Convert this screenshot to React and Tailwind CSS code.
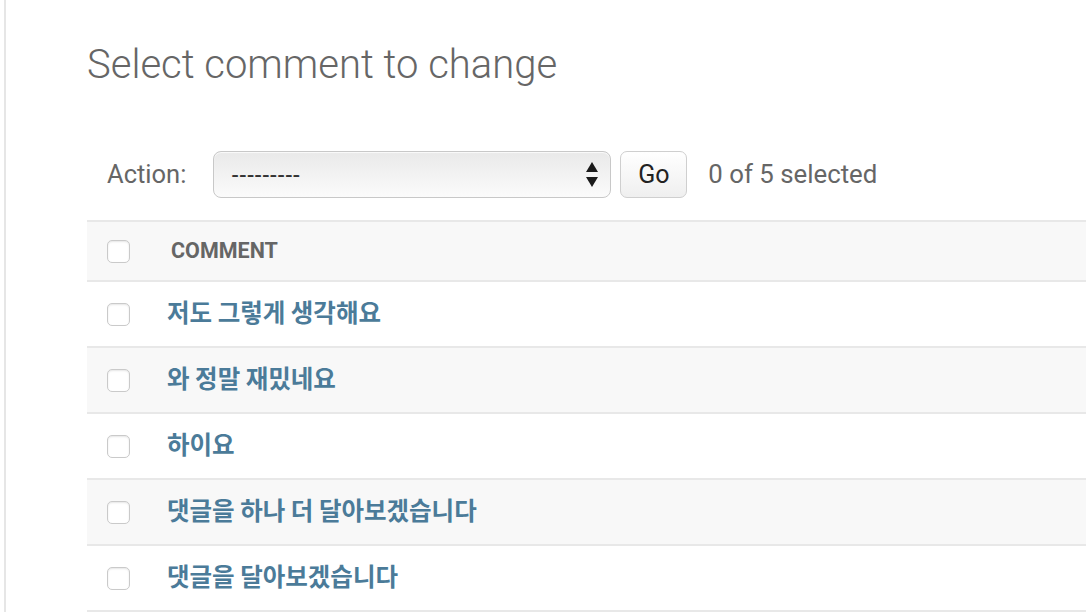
import { useState } from 'react'

const comments = [
  '저도 그렇게 생각해요',
  '와 정말 재밌네요',
  '하이요',
  '댓글을 하나 더 달아보겠습니다',
  '댓글을 달아보겠습니다',
]

const fontUi = { fontFamily: 'Roboto, "Noto Sans CJK KR", sans-serif' }

function Checkbox({ checked, onChange }) {
  return (
    <button
      type="button"
      onClick={onChange}
      className={
        checked
          ? 'h-[23px] w-[23px] rounded-[5px] border border-[#5b80b2] bg-[#79aec8] shadow-[inset_0_1px_2px_rgba(0,0,0,0.1)]'
          : 'h-[23px] w-[23px] rounded-[5px] border border-[#cacaca] bg-white shadow-[inset_0_1px_2px_rgba(0,0,0,0.1)]'
      }
    />
  )
}

export default function App() {
  const [selected, setSelected] = useState([])
  const [action, setAction] = useState('')

  const toggle = (i) =>
    setSelected((s) => (s.includes(i) ? s.filter((x) => x !== i) : [...s, i]))

  const allChecked = selected.length === comments.length

  return (
    <div className="flex h-[612px] w-full overflow-hidden bg-white" style={fontUi}>
      <div className="w-[4px] shrink-0" />
      <div className="w-[2px] shrink-0 bg-[#e6e6e6]" />

      <div className="flex-1 pl-[81px]">
        <h1 className="mt-[37px] h-[56px] text-[40px] font-light leading-[56px] text-[#666]">
          Select comment to change
        </h1>

        <div className="mt-[58px] flex h-[47px] items-center">
          <label className="ml-[20px] text-[25.5px] text-[#666]">Action:</label>
          <div className="relative ml-[27px] h-[47px] w-[398px]">
            <select
              value={action}
              onChange={(e) => setAction(e.target.value)}
              className="h-full w-full appearance-none rounded-[8px] border border-[#c8c8c8] bg-gradient-to-b from-[#e9e9e9] to-[#fbfbfb] pl-[17px] text-[23px] text-[#333] shadow-[inset_0_1px_1px_rgba(255,255,255,0.8)] outline-none"
              style={{ fontFamily: '"Liberation Sans", Arial, sans-serif' }}
            >
              <option value="">---------</option>
              <option value="delete">Delete selected comments</option>
            </select>
            <svg
              className="pointer-events-none absolute right-[13px] top-[11px]"
              width="12"
              height="25"
              viewBox="0 0 12 25"
            >
              <path d="M6 0 L12 10 L0 10 Z" fill="#1a1a1a" />
              <path d="M0 15 L12 15 L6 25 Z" fill="#1a1a1a" />
            </svg>
          </div>
          <button
            type="button"
            className="ml-[9px] h-[47px] w-[67px] rounded-[7px] border border-[#cfcfcf] bg-gradient-to-b from-white to-[#efefef] text-[25px] text-[#222]"
          >
            Go
          </button>
          <span className="ml-[21px] text-[25.8px] text-[#666]">
            {selected.length} of {comments.length} selected
          </span>
        </div>

        <div className="mt-[22px] min-w-[1000px]">
          <div className="flex h-[62px] items-center border-y-2 border-[#e8e8e8] bg-[#f8f8f8]">
            <div className="ml-[20px] flex">
              <Checkbox
                checked={allChecked}
                onChange={() =>
                  setSelected(allChecked ? [] : comments.map((_, i) => i))
                }
              />
            </div>
            <span className="ml-[41px] text-[21.5px] font-bold uppercase text-[#666]">
              Comment
            </span>
          </div>

          {comments.map((c, i) => (
            <div
              key={c}
              className={
                i % 2 === 1
                  ? 'flex h-[66px] items-center border-b-2 border-[#e8e8e8] bg-[#f8f8f8]'
                  : 'flex h-[66px] items-center border-b-2 border-[#e8e8e8] bg-white'
              }
            >
              <div className="ml-[20px] flex">
                <Checkbox checked={selected.includes(i)} onChange={() => toggle(i)} />
              </div>
              <a
                href="#"
                className="ml-[37px] -mt-[4px] text-[24.5px] font-bold text-[#4b7b99]"
                style={{ fontFamily: '"Noto Sans CJK KR", Roboto, sans-serif' }}
              >
                {c}
              </a>
            </div>
          ))}
        </div>
      </div>
    </div>
  )
}
